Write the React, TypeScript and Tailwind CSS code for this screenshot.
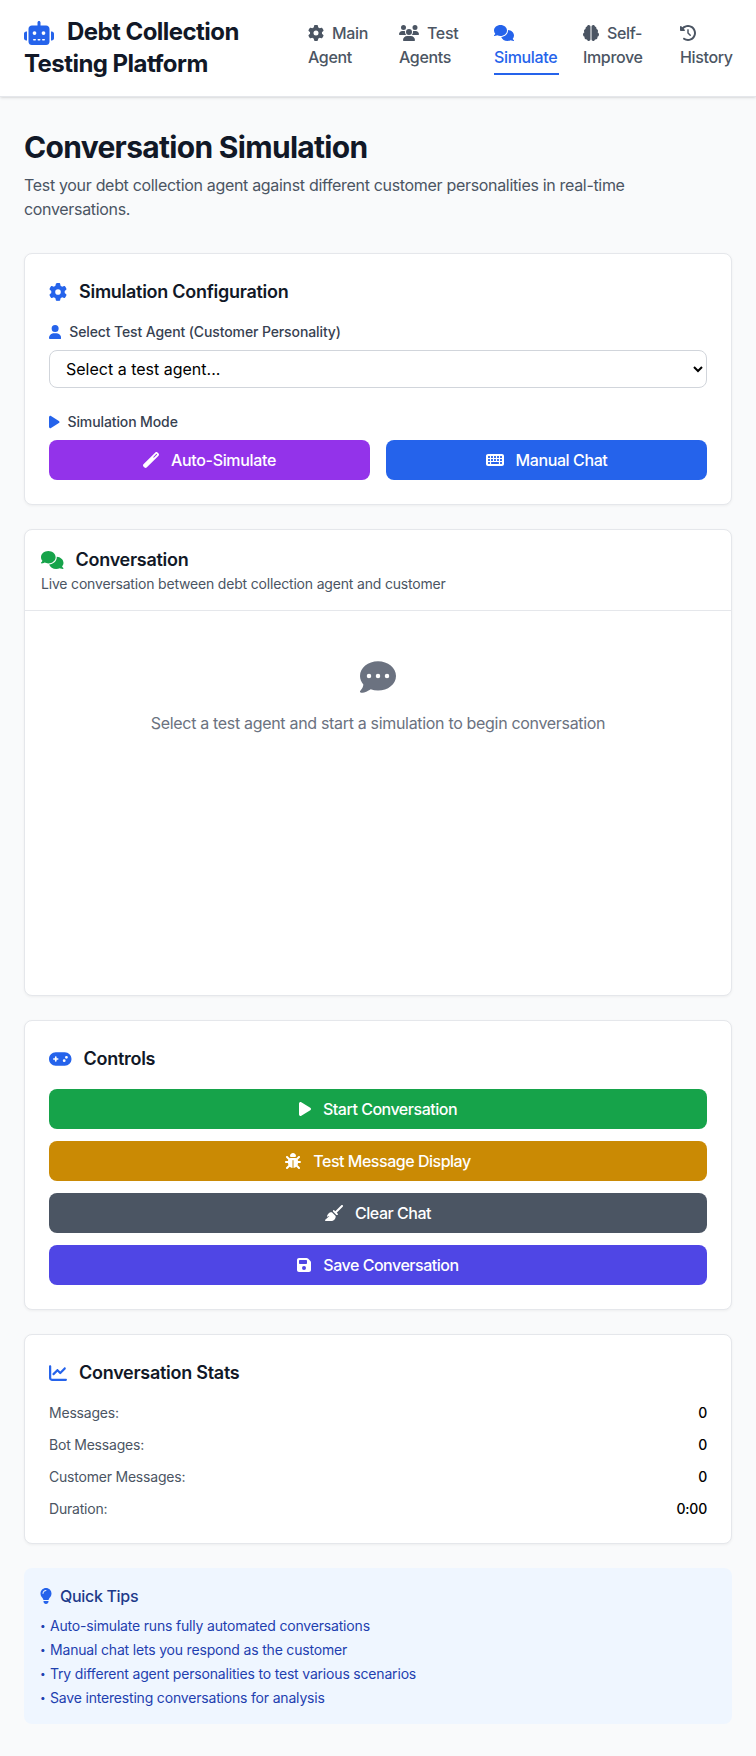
import React from 'react';
import {
  FaRobot,
  FaGear,
  FaUsers,
  FaComments,
  FaBrain,
  FaClockRotateLeft,
  FaUser,
  FaPlay,
  FaWandMagic,
  FaKeyboard,
  FaCommentDots,
  FaGamepad,
  FaBug,
  FaBroom,
  FaFloppyDisk,
  FaChartLine,
  FaLightbulb,
} from 'react-icons/fa6';

// icon boxes keep the glyph's own aspect ratio, height stays 1em
const navItems = [
  { label: 'Main Agent', icon: FaGear, width: 'w-[67px]', box: 'w-[1em]' },
  { label: 'Test Agents', icon: FaUsers, width: 'w-[71px]', box: 'w-[1.25em]' },
  { label: 'Simulate', icon: FaComments, width: 'w-[65px]', box: 'w-[1.25em]', active: true },
  { label: 'Self-Improve', icon: FaBrain, width: 'w-[73px]', box: 'w-[1em]' },
  { label: 'History', icon: FaClockRotateLeft, width: 'w-[52px]', box: 'w-[1em]' },
];

const controls = [
  { label: 'Start Conversation', icon: FaPlay, color: 'bg-[#16a34a]', box: 'w-[0.75em]' },
  { label: 'Test Message Display', icon: FaBug, color: 'bg-[#ca8a04]', box: 'w-[1em]' },
  { label: 'Clear Chat', icon: FaBroom, color: 'bg-[#4b5563]', box: 'w-[1.125em]' },
  { label: 'Save Conversation', icon: FaFloppyDisk, color: 'bg-[#4f46e5]', box: 'w-[0.875em]' },
];

const stats = [
  { label: 'Messages:', value: '0' },
  { label: 'Bot Messages:', value: '0' },
  { label: 'Customer Messages:', value: '0' },
  { label: 'Duration:', value: '0:00' },
];

const tips = [
  'Auto-simulate runs fully automated conversations',
  'Manual chat lets you respond as the customer',
  'Try different agent personalities to test various scenarios',
  'Save interesting conversations for analysis',
];

const Card: React.FC<{ className?: string; children: React.ReactNode }> = ({ className = '', children }) => (
  <div className={`bg-white rounded-lg border border-[#e5e7eb] shadow-[0_1px_3px_0_rgb(0_0_0_/_0.05)] ${className}`}>
    {children}
  </div>
);

export default function App() {
  return (
    <div className="min-h-screen bg-[#f9fafb] font-['Inter',sans-serif] text-[#111827] tracking-[-0.02em]">
      <header className="bg-white border-b border-[#e5e7eb] shadow-sm px-6 py-4 flex justify-between items-center">
        <h1 className="text-2xl font-bold w-[260px] tracking-[-0.023em]">
          <FaRobot className="inline-block w-[1.25em] h-[1em] text-[#2563eb] mr-[13px] align-[-5px]" />
          Debt Collection Testing Platform
        </h1>
        <nav className="flex gap-6">
          {navItems.map(({ label, icon: Icon, width, box, active }) => (
            <a
              key={label}
              className={`${width} block pb-1 border-b-2 font-medium tracking-[-0.022em] ${
                active ? 'text-[#2563eb] border-[#2563eb]' : 'text-[#4b5563] border-transparent'
              }`}
            >
              <Icon className={`inline-block ${box} h-[1em] mr-2 align-[-2px]`} />
              {label}
            </a>
          ))}
        </nav>
      </header>

      <main className="px-6 py-8">
        <h2 className="text-3xl font-bold mb-2 tracking-[-0.023em]">Conversation Simulation</h2>
        <p className="text-[#4b5563] mb-8">
          Test your debt collection agent against different customer personalities in real-time conversations.
        </p>

        <Card className="p-6 mb-6">
          <h3 className="text-lg font-semibold mb-4 flex items-center tracking-[-0.015em]">
            <FaGear className="w-[1em] h-[1em] text-[#2563eb] mr-3" />
            Simulation Configuration
          </h3>
          <label className="flex items-center text-sm font-medium text-[#374151] mb-2 tracking-[-0.008em]">
            <FaUser className="w-[0.875em] h-[1em] text-[#2563eb] mr-2" />
            Select Test Agent (Customer Personality)
          </label>
          <select className="w-full h-[38px] pl-3 pr-4 border border-[#d1d5db] rounded-lg bg-white text-black mb-6 tracking-normal">
            <option>Select a test agent...</option>
          </select>
          <label className="flex items-center text-sm font-medium text-[#374151] mb-2 tracking-[-0.008em]">
            <FaPlay className="w-[0.75em] h-[1em] text-[#2563eb] mr-2" />
            Simulation Mode
          </label>
          <div className="grid grid-cols-2 gap-4">
            <button className="h-10 rounded-lg bg-[#9333ea] text-white font-medium flex items-center justify-center">
              <FaWandMagic className="w-[1em] h-[1em] mr-3" />
              Auto-Simulate
            </button>
            <button className="h-10 rounded-lg bg-[#2563eb] text-white font-medium flex items-center justify-center tracking-[-0.025em]">
              <FaKeyboard className="w-[1.125em] h-[1em] mr-3" />
              Manual Chat
            </button>
          </div>
        </Card>

        <Card className="mb-6">
          <div className="p-4 border-b border-[#e5e7eb]">
            <h3 className="text-lg font-semibold flex items-center tracking-[-0.015em]">
              <FaComments className="w-[1.25em] h-[1em] text-[#16a34a] mr-3" />
              Conversation
            </h3>
            <p className="text-sm text-[#4b5563] tracking-[-0.013em]">
              Live conversation between debt collection agent and customer
            </p>
          </div>
          <div className="h-[384px] p-4">
            <div className="py-8 flex flex-col items-center text-[#6b7280]">
              <FaCommentDots className="text-4xl mb-4" />
              <p>Select a test agent and start a simulation to begin conversation</p>
            </div>
          </div>
        </Card>

        <Card className="p-6 mb-6">
          <h3 className="text-lg font-semibold mb-4 flex items-center tracking-[-0.015em]">
            <FaGamepad className="w-[1.25em] h-[1em] text-[#2563eb] mr-3" />
            Controls
          </h3>
          <div className="space-y-3">
            {controls.map(({ label, icon: Icon, color, box }) => (
              <button
                key={label}
                className={`w-full h-10 rounded-lg ${color} text-white font-medium flex items-center justify-center tracking-[-0.03em]`}
              >
                <Icon className={`${box} h-[1em] mr-3`} />
                {label}
              </button>
            ))}
          </div>
        </Card>

        <Card className="p-6 mb-6">
          <h3 className="text-lg font-semibold mb-4 flex items-center tracking-[-0.015em]">
            <FaChartLine className="w-[1em] h-[1em] text-[#2563eb] mr-3" />
            Conversation Stats
          </h3>
          <div className="space-y-3">
            {stats.map(({ label, value }) => (
              <div key={label} className="flex justify-between text-sm tracking-[-0.015em]">
                <span className="text-[#4b5563]">{label}</span>
                <span className="font-medium text-black">{value}</span>
              </div>
            ))}
          </div>
        </Card>

        <div className="bg-[#eff6ff] rounded-lg p-4">
          <h4 className="font-medium text-[#1e3a8a] mb-2 flex items-center">
            <FaLightbulb className="w-[0.75em] h-[1em] text-[#2563eb] mr-2" />
            Quick Tips
          </h4>
          <ul className="text-sm text-[#1e40af] space-y-1 tracking-[-0.013em]">
            {tips.map((tip) => (
              <li key={tip}>
                <span className="inline-block w-[10px] text-[10px] align-[2px]">•</span>
                {tip}
              </li>
            ))}
          </ul>
        </div>
      </main>
    </div>
  );
}
